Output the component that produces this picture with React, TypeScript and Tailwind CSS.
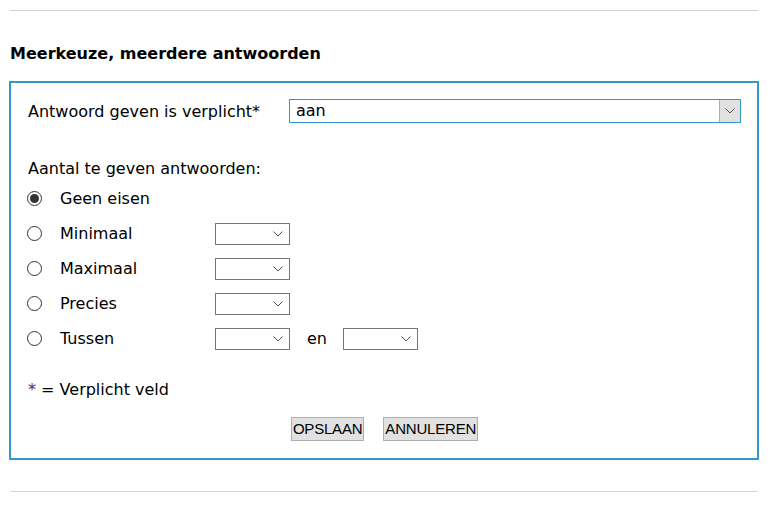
import React from 'react';

const Chevron: React.FC<{ className?: string }> = ({ className }) => (
  <svg width="10" height="6" viewBox="0 0 10 6" className={className}>
    <path d="M0.5 0.5 L5 5 L9.5 0.5" fill="none" stroke="#555" strokeWidth="1" />
  </svg>
);

const SmallSelect: React.FC = () => (
  <div className="w-[75px] h-[22px] border border-[#767676] bg-white flex items-center justify-end pr-[6px]">
    <Chevron />
  </div>
);

const Radio: React.FC<{ checked?: boolean }> = ({ checked }) => (
  <div className="w-[15px] h-[15px] rounded-full border border-[#333] bg-white flex items-center justify-center">
    {checked && <div className="w-[9px] h-[9px] rounded-full bg-[#333]" />}
  </div>
);

const options = [
  { label: 'Geen eisen', checked: true, selects: 0 },
  { label: 'Minimaal', selects: 1 },
  { label: 'Maximaal', selects: 1 },
  { label: 'Precies', selects: 1 },
  { label: 'Tussen', selects: 2 },
];

export default function App() {
  return (
    <div
      className="w-[783px] h-[505px] bg-white pt-[10px] px-[9px] text-[16px] text-black"
      style={{ fontFamily: '"DejaVu Sans", Verdana, sans-serif' }}
    >
      <div className="ml-[1px] w-[748px] h-px bg-[#d3d3d3]" />

      <h2 className="mt-[33px] ml-[1px] h-[20px] leading-[20px] font-bold text-[16px]">
        Meerkeuze, meerdere antwoorden
      </h2>

      <div className="mt-[17px] w-[750px] h-[379px] border-2 border-[#3399cc] pt-[16px] pl-[17px] pr-[16px]">
        <div className="flex items-center h-[24px]">
          <label className="w-[261px] leading-[20px] pt-[1px]">Antwoord geven is verplicht*</label>
          <div className="flex-1 h-[24px] border border-[#3399cc] flex items-stretch">
            <div className="flex-1 pl-[6px] leading-[22px]">aan</div>
            <div className="w-[21px] bg-[#e1e1e1] border-l border-[#adadad] flex items-center justify-center">
              <Chevron />
            </div>
          </div>
        </div>

        <p className="mt-[35px] leading-[20px] pt-[1px]">Aantal te geven antwoorden:</p>

        <div className="mt-[2px] flex flex-col">
          {options.map((o) => (
            <div key={o.label} className="h-[35px] flex items-center">
              <div className="w-[33px] -ml-[1px]">
                <Radio checked={o.checked} />
              </div>
              <span className="w-[155px] leading-[20px] pt-[1px]">{o.label}</span>
              {o.selects > 0 && <SmallSelect />}
              {o.selects > 1 && (
                <>
                  <span className="ml-[17px] w-[36px] leading-[20px] pt-[1px]">en</span>
                  <SmallSelect />
                </>
              )}
            </div>
          ))}
        </div>

        <p className="mt-[23px] leading-[20px] pt-[1px]">
          <span className="text-[#4b1f73]">*</span> = Verplicht veld
        </p>

        <div
          className="mt-[17px] flex justify-center gap-[19px] text-[15px]"
          style={{ fontFamily: '"Liberation Sans", Arial, sans-serif' }}
        >
          <button className="h-[24px] px-[1px] bg-[#e1e1e1] border border-[#adadad] leading-[20px] tracking-[-0.2px]">OPSLAAN</button>
          <button className="h-[24px] px-[1px] bg-[#e1e1e1] border border-[#adadad] leading-[20px] tracking-[-0.2px]">ANNULEREN</button>
        </div>
      </div>

      <div className="mt-[31px] ml-[1px] w-[748px] h-px bg-[#d3d3d3]" />
    </div>
  );
}
